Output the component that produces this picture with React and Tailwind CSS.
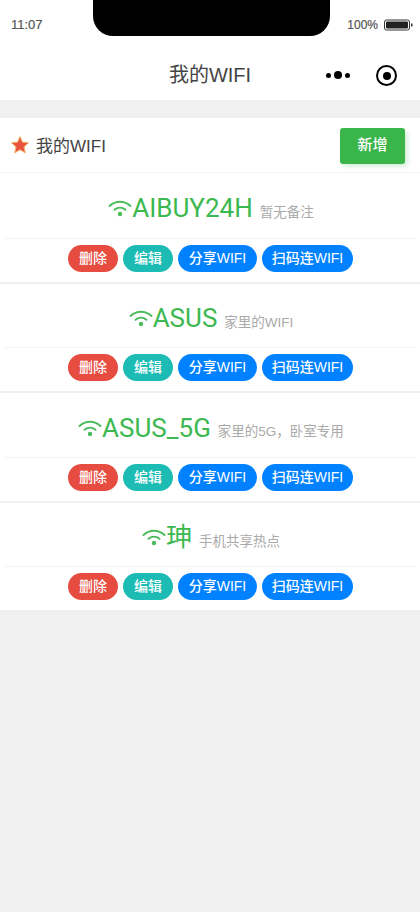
import React from 'react';

const FONT = { fontFamily: '"Liberation Sans", "Noto Sans CJK SC", sans-serif' };
const SSID_FONT = { fontFamily: 'Roboto, "Noto Sans CJK SC", sans-serif' };

const networks = [
  { ssid: 'AIBUY24H', note: '暂无备注', h: 'h-[66px]' },
  { ssid: 'ASUS', note: '家里的WIFI', h: 'h-[64px]' },
  { ssid: 'ASUS_5G', note: '家里的5G，卧室专用', h: 'h-[65px]' },
  { ssid: '珅', note: '手机共享热点', h: 'h-[64px]' },
];

const WifiIcon = () => (
  <svg width="24" height="18" viewBox="0 0 24 18" fill="none" stroke="#4cbb5c" strokeWidth="1.900" strokeLinecap="round" className="shrink-0">
    <path d="M1.500 7C7.500 1.300 16.500 1.300 22.500 7" />
    <path d="M6.500 10.800C9.800 8 14.200 8 17.500 10.800" />
    <circle cx="12" cy="15" r="2.200" fill="#4cbb5c" stroke="none" />
  </svg>
);

const Pill = ({ className, children }) => (
  <div className={`h-[27px] rounded-full flex items-center justify-center text-[14px] font-medium text-white ${className}`}>{children}</div>
);

const WifiRow = ({ ssid, note, h }) => (
  <div className="bg-white border-b-2 border-[#f0f0f0] last:border-b-0">
    <div className={`${h} mx-1 pt-[5px] pl-[2px] flex items-center justify-center border-b border-[#f3f3f3]`}>
      <WifiIcon />
      <span style={SSID_FONT} className="text-[26px] leading-none text-[#3cb850]">{ssid}</span>
      <span className="ml-[7px] mt-[9px] text-[13.500px] leading-none text-[#aaaaaa]">{note}</span>
    </div>
    <div className="h-[43px] pt-[6px] flex justify-center gap-[5px] pl-[1px]">
      <Pill className="w-[50px] bg-[#e64c40]">删除</Pill>
      <Pill className="w-[50px] bg-[#1cbbb4]">编辑</Pill>
      <Pill className="w-[79px] bg-[#0081ff]">分享WIFI</Pill>
      <Pill className="w-[91px] bg-[#0081ff]">扫码连WIFI</Pill>
    </div>
  </div>
);

export default function App() {
  return (
    <div style={FONT} className="w-[420px] h-[912px] bg-[#f0f0f0] overflow-hidden">
      {/* status bar + nav */}
      <div className="bg-white h-[100px]">
        <div className="h-[36px] px-[11px] flex justify-between relative">
          <span className="text-[13px] text-[#555] mt-[18px] leading-none [-webkit-text-stroke:0.2px_#555]">11:07</span>
          <div className="absolute left-[93px] top-0 w-[237px] h-[36px] bg-black rounded-b-[20px]" />
          <div className="flex items-center gap-[6px] mt-[18px] h-[14px] -mr-[5px]">
            <span className="text-[12px] text-[#555] leading-none [-webkit-text-stroke:0.2px_#555]">100%</span>
            <svg width="30" height="12" viewBox="0 0 30 12">
              <rect x="0.500" y="1" width="25" height="10" rx="2" fill="none" stroke="#333" />
              <rect x="2" y="2.500" width="22" height="7" rx="1" fill="#222" />
              <rect x="27" y="4.500" width="1.500" height="3" fill="#333" />
            </svg>
          </div>
        </div>
        <div className="h-[64px] flex items-center relative">
          <div className="w-full text-center text-[20px] text-[#444] leading-none mt-[13px]">我的WIFI</div>
          <div className="absolute left-[326px] top-[39px] -translate-y-1/2 flex items-center gap-[3px]">
            <span className="w-[5px] h-[5px] rounded-full bg-black" />
            <span className="w-[8px] h-[8px] rounded-full bg-black" />
            <span className="w-[5px] h-[5px] rounded-full bg-black" />
          </div>
          <div className="absolute left-[376px] top-[29px] w-[21px] h-[21px] rounded-full border-[2.500px] border-black flex items-center justify-center">
            <span className="w-[8px] h-[8px] rounded-full bg-black" />
          </div>
        </div>
      </div>

      <div className="mt-[18px] bg-white">
        {/* header */}
        <div className="h-[55px] pl-[10px] pr-[15px] flex items-center justify-between border-b border-[#f3f3f3]">
          <div className="flex items-center gap-[6px]">
            <svg width="20" height="20" viewBox="0 0 24 24">
              <path d="M12 2l3 6.600 7.200.8-5.400 4.800 1.500 7.100L12 17.700l-6.300 3.600 1.500-7.100L1.800 9.400 9 8.600z" fill="#e8533f" stroke="#f0b060" strokeWidth="1.200" strokeLinejoin="round" />
            </svg>
            <span className="mt-[4px] text-[17px] text-[#444]">我的WIFI</span>
          </div>
          <div className="w-[65px] h-[36px] mt-[1px] rounded-[3px] bg-[#39b54a] text-white text-[15px] font-medium flex items-center justify-center shadow-[3px_3px_4px_rgba(57,181,74,0.2)]">新增</div>
        </div>
        {networks.map((n) => (
          <WifiRow key={n.ssid} {...n} />
        ))}
      </div>
    </div>
  );
}
